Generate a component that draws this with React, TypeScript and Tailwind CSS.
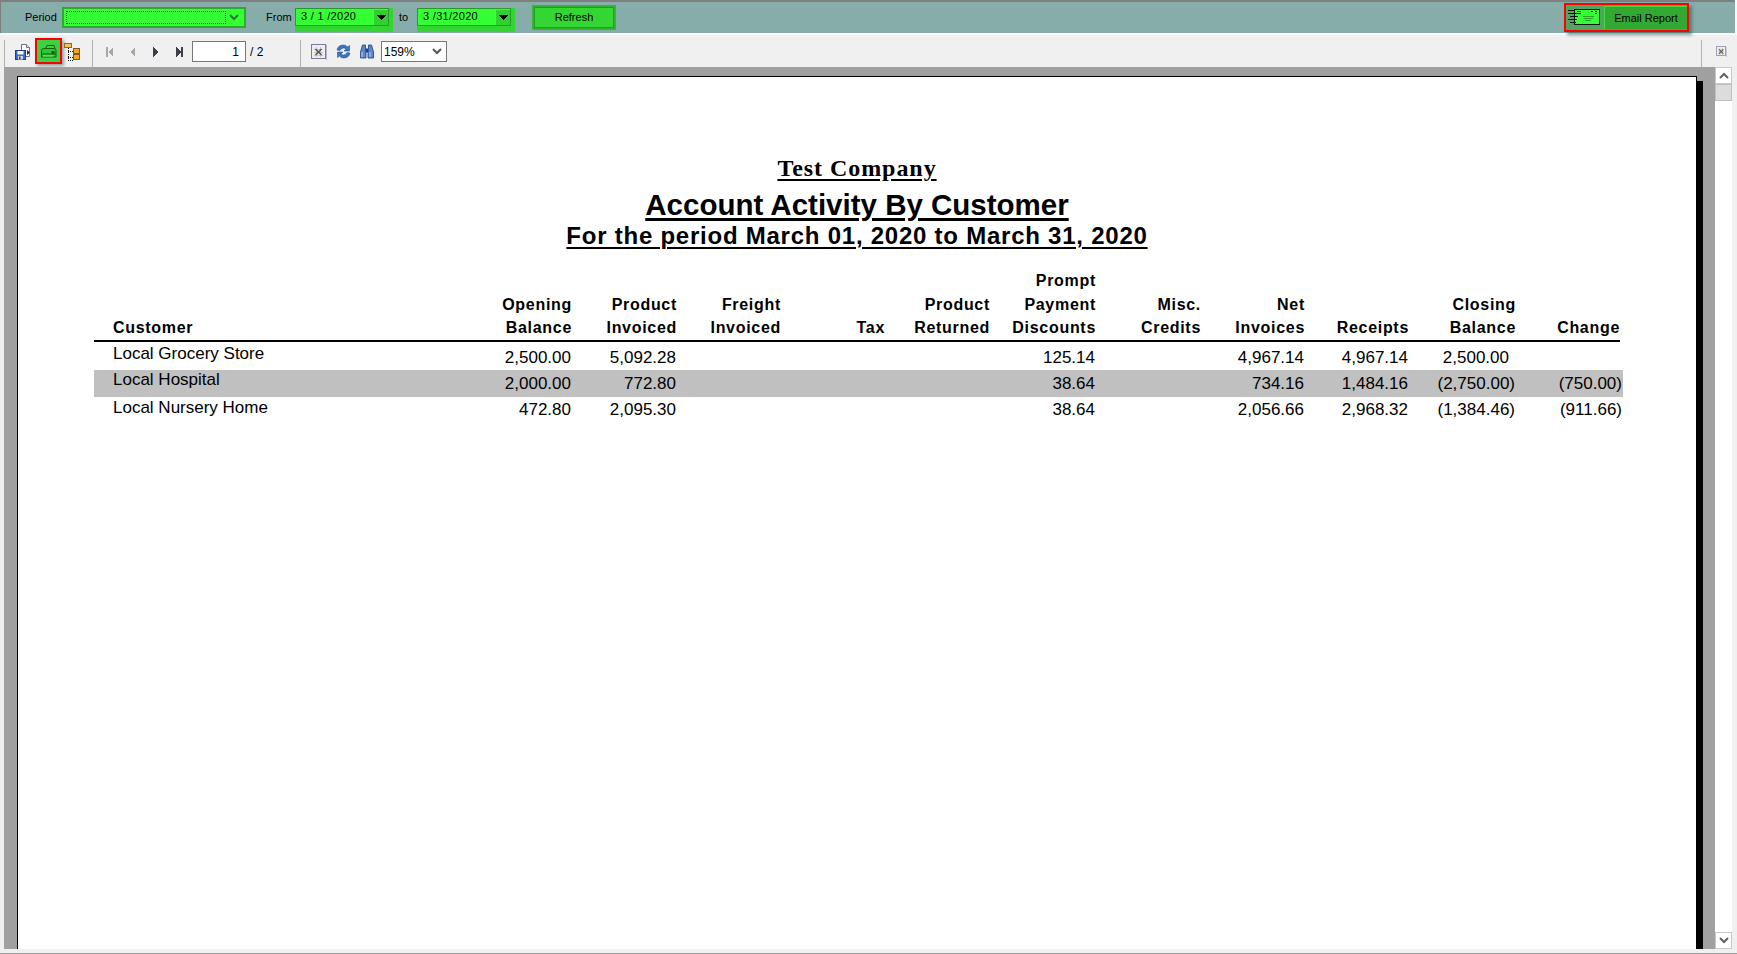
import React from 'react';

const cols = 'grid grid-cols-[373px_105px_105px_104px_104px_105px_106px_105px_104px_104px_107px_107px]';

const headers = [
  ['', '', 'Customer'],
  ['', 'Opening', 'Balance'],
  ['', 'Product', 'Invoiced'],
  ['', 'Freight', 'Invoiced'],
  ['', '', 'Tax'],
  ['', 'Product', 'Returned'],
  ['Prompt', 'Payment', 'Discounts'],
  ['', 'Misc.', 'Credits'],
  ['', 'Net', 'Invoices'],
  ['', '', 'Receipts'],
  ['', 'Closing', 'Balance'],
  ['', '', 'Change'],
];

const rows = [
  { name: 'Local Grocery Store', cells: ['2,500.00', '5,092.28', '', '', '', '125.14', '', '4,967.14', '4,967.14', '2,500.00', ''], h: 'h-[28px]', nameTop: 'pt-[1px]', valTop: 'pt-[5px]', band: false },
  { name: 'Local Hospital', cells: ['2,000.00', '772.80', '', '', '', '38.64', '', '734.16', '1,484.16', '(2,750.00)', '(750.00)'], h: 'h-[27px]', nameTop: '-mt-[1px]', valTop: 'pt-[3px]', band: true },
  { name: 'Local Nursery Home', cells: ['472.80', '2,095.30', '', '', '', '38.64', '', '2,056.66', '2,968.32', '(1,384.46)', '(911.66)'], h: 'h-[27px]', nameTop: 'pt-[0px]', valTop: 'pt-[2px]', band: false },
];

const NavIcon = ({ dir, bar, dark }: { dir: 'l' | 'r'; bar?: boolean; dark?: boolean }) => {
  const fill = dark ? '#3c3f4a' : '#a4a8ad';
  return (
    <svg width="9" height="10" viewBox="0 0 9 10" shapeRendering="crispEdges">
      {dir === 'l' ? (
        <>
          <path d="M7 0v10L2 5z" fill={fill} />
          {bar && <rect x="0" y="0" width="2" height="10" fill={fill} />}
        </>
      ) : (
        <>
          <path d="M2 0v10l5-5z" fill={fill} />
          {bar && <rect x="7" y="0" width="2" height="10" fill={fill} />}
        </>
      )}
    </svg>
  );
};

const SaveIcon = () => (
  <svg width="16" height="17" viewBox="0 0 16 17">
    <path d="M6.500 1.500h5l3 3v9h-8z" fill="#fff" stroke="#6b7480" />
    <path d="M11.500 1.500v3h3" fill="#dfe4ea" stroke="#6b7480" />
    <path d="M12 7l3 2.500-3 2.500z" fill="#1d2b55" />
    <rect x="0.500" y="7.500" width="10" height="9" fill="#3d6cc0" stroke="#1f3c80" />
    <rect x="2.500" y="8" width="6" height="3.500" fill="#f4f6fa" />
    <rect x="3" y="13" width="5" height="3.500" fill="#cfd8e8" />
    <rect x="4" y="13.500" width="1.500" height="2.500" fill="#1f3c80" />
  </svg>
);

const PrintIcon = () => (
  <svg width="17" height="13" viewBox="0 0 17 13">
    <path d="M5.500 3.500l1.500-3h7l1 3" fill="#35d835" stroke="#0d5f14" />
    <path d="M1.500 5.500q0-2 2-2h10.500q2 0 2 2v6.500h-14.500z" fill="#2fc92f" stroke="#0d5f14" />
    <path d="M1.500 9h14.500" stroke="#0d5f14" />
    <rect x="11.500" y="6" width="3" height="3" fill="#0d5f14" />
    <path d="M3 11h10" stroke="#7df07d" />
  </svg>
);

const TreeIcon = () => (
  <svg width="16" height="18" viewBox="0 0 16 18" shapeRendering="crispEdges">
    <path d="M4 5v12M4 8h5M4 14h5M4 17h5" stroke="#111" strokeDasharray="1 1" fill="none" />
    <rect x="0.500" y="0.500" width="7" height="4" fill="#f6c056" stroke="#8a6a1c" />
    <rect x="9.500" y="5.500" width="6" height="5" fill="#f5a623" stroke="#7f5a10" />
    <rect x="9.500" y="11.500" width="6" height="5" fill="#f5a623" stroke="#7f5a10" />
  </svg>
);

const ExportIcon = ({ size = 16 }: { size?: number }) => (
  <svg width={size} height={size} viewBox="0 0 16 16" shapeRendering="crispEdges">
    <rect x="0.500" y="0.500" width="14" height="14" fill="#eeeef2" stroke="#7a7a9e" />
    <path d="M15.500 1v15H1" stroke="#b5b5c8" fill="none" />
    <path d="M3 5.500h9M3 8.500h9M3 11.500h9M5.500 3v10M9.500 3v10" stroke="#c4c4c4" fill="none" />
    <path d="M4.500 5l6 6M10.500 5l-6 6" stroke="#555" strokeWidth="1.500" shapeRendering="auto" />
  </svg>
);

const RefreshIcon = () => (
  <svg width="15" height="15" viewBox="0 0 15 15">
    <path d="M1 6q1-5 6.500-5 3 0 4 2l2-1.500V7H8l1.800-1.800Q9 4 7.500 4 5 4 4 6.500z" fill="#3a74c4" stroke="#1c4590" strokeWidth=".5" />
    <path d="M14 9q-1 5-6.500 5-3 0-4-2l-2 1.500V8H7L5.200 9.800Q6 11 7.500 11 10 11 11 8.500z" fill="#3a74c4" stroke="#1c4590" strokeWidth=".5" />
  </svg>
);

const BinocularsIcon = () => (
  <svg width="14" height="15" viewBox="0 0 14 15">
    <path d="M2.500 1h3v4l.5 1v8H.5V8z" fill="#5a86cc" stroke="#1c3f85" strokeWidth=".8" />
    <path d="M11.500 1h-3v4l-.5 1v8h5.500V8z" fill="#5a86cc" stroke="#1c3f85" strokeWidth=".8" />
    <rect x="5.800" y="4.500" width="2.400" height="4" fill="#1c3f85" />
    <path d="M2 8v5M10 8v5" stroke="#c4d6f2" />
  </svg>
);

const MailIcon = () => (
  <svg width="33" height="17" viewBox="0 0 33 17" shapeRendering="crispEdges">
    <rect x="6.500" y="0.500" width="25" height="15" fill="#33ff33" stroke="#111" />
    <path d="M0 1h7M0 4h13M2 7h8M0 10h9M2 13h6" stroke="#111" />
    <path d="M9 2h4" stroke="#1a6f1a" />
    <path d="M23 2h2M27 2h2M27 4h2" stroke="#111" />
    <path d="M15 7h11M16 9h9M17 11h6" stroke="#2aa52a" />
  </svg>
);

const Caret = () => (
  <svg width="9" height="5" viewBox="0 0 9 5" shapeRendering="crispEdges">
    <path d="M0 0h9L4.500 5z" fill="#000" />
  </svg>
);

const Chevron = ({ color, up }: { color: string; up?: boolean }) => (
  <svg width="10" height="7" viewBox="0 0 10 7">
    <path d={up ? 'M1 6l4-4 4 4' : 'M1 1l4 4 4-4'} fill="none" stroke={color} strokeWidth="2" />
  </svg>
);

const DateBox = ({ value, w }: { value: string; w: string }) => (
  <div className={`${w} h-[24px] self-start mt-[4px] bg-[#33d433] pr-[4px] pb-[6px]`}>
    <div className="h-full flex items-center border border-[#2a9a2a] bg-[#33ff33] pl-[5px]">
      <span className="text-[11px] tracking-[0.3px] text-black flex-1 whitespace-pre">{value}</span>
      <div className="w-[15px] h-full flex items-center justify-center bg-[#2fd02f] border-l border-t border-[#63e463] border-r-[#1f7f1f]">
        <Caret />
      </div>
    </div>
  </div>
);

const App: React.FC = () => {
  return (
    <div className="w-[1737px] h-[954px] overflow-hidden bg-[#f0f0f0] flex flex-col font-['Liberation_Sans',Arial,sans-serif] text-black">
      {/* filter bar */}
      <div className="h-[35px] bg-white pr-[2px] pb-[2px] shrink-0">
        <div className="h-full flex items-center bg-[#87adab] border-t-2 border-l border-[#7f7f7f] pl-[24px] pr-[46px]">
          <span className="w-[32px] text-[11px]">Period</span>
          <div className="ml-[5px] w-[184px] h-[21px] flex items-center border-2 border-[#2eaa2e] bg-[#33ff33] p-[2px]">
            <div className="flex-1 h-full border border-dotted border-[#0a3a0a]" />
            <div className="w-[16px] flex justify-center"><Chevron color="#1f7a3a" /></div>
          </div>
          <span className="ml-[20px] w-[23px] text-[11px]">From</span>
          <div className="ml-[6px] flex"><DateBox value="3 / 1 /2020" w="w-[98px]" /></div>
          <span className="ml-[6px] w-[12px] text-[11px]">to</span>
          <div className="ml-[6px] flex"><DateBox value="3 /31/2020" w="w-[98px]" /></div>
          <button className="ml-[17px] w-[84px] h-[25px] border border-[#3cb043] bg-[#2fb32f] p-[1px]">
            <div className="h-full flex items-center justify-center bg-[#33d633] border border-[#239c23] text-[11px]">Refresh</div>
          </button>
          <div className="ml-auto flex items-center h-[29px] w-[125px] border-2 border-[#ff0000] bg-[#4fa55f] shadow-[3px_3px_3px_rgba(50,90,80,0.6)]">
            <div className="w-[38px] flex justify-end pr-[3px]"><MailIcon /></div>
            <div className="w-[83px] h-[23px] flex items-center justify-center bg-[#33a933] border-t border-l border-[#46d646] border-b-[#1e7f1e] border-r-[#1e7f1e] text-[11px]">
              Email Report
            </div>
          </div>
        </div>
      </div>

      {/* viewer toolbar */}
      <div className="h-[32px] shrink-0 flex items-center pl-[4px] pr-[10px] text-[11px]">
        <div className="h-[27px] mt-[4px] border-l border-[#b0b0b0]" />
        <div className="ml-[10px] w-[16px] mt-[1px]"><SaveIcon /></div>
        <div className="ml-[4px] w-[27px] h-[26px] flex items-center justify-center border-2 border-[#ff0000] bg-[#3ecf45] shadow-[2px_2px_3px_rgba(0,0,0,0.35)]">
          <PrintIcon />
        </div>
        <div className="ml-[2px] w-[16px] mt-[1px]"><TreeIcon /></div>
        <div className="ml-[12px] h-[27px] mt-[4px] border-l border-[#b0b0b0]" />
        <div className="ml-[13px] w-[9px] mt-[1px] flex"><NavIcon dir="l" bar /></div>
        <div className="ml-[13px] w-[9px] mt-[1px] flex"><NavIcon dir="l" /></div>
        <div className="ml-[14px] w-[9px] mt-[1px] flex"><NavIcon dir="r" dark /></div>
        <div className="ml-[14px] w-[9px] mt-[1px] flex"><NavIcon dir="r" bar dark /></div>
        <div className="ml-[9px] w-[54px] h-[21px] mt-[1px] flex items-center justify-end bg-white border border-[#767676] pr-[6px] text-[12px]">1</div>
        <span className="ml-[4px] w-[50px] mt-[1px] text-[12px]">/ 2</span>
        <div className="h-[27px] mt-[4px] border-l border-[#b0b0b0]" />
        <div className="ml-[10px] mt-[1px]"><ExportIcon /></div>
        <div className="ml-[9px] mt-[1px]"><RefreshIcon /></div>
        <div className="ml-[9px] mt-[1px]"><BinocularsIcon /></div>
        <div className="ml-[7px] w-[66px] h-[21px] mt-[1px] flex items-center bg-white border border-[#767676] pl-[2px] pr-[4px] text-[12px]">
          <span className="flex-1">159%</span>
          <Chevron color="#555" />
        </div>
        <div className="ml-auto h-[27px] mt-[4px] border-l border-[#b0b0b0]" />
        <div className="ml-[14px] w-[11px] mt-[1px]"><ExportIcon size={11} /></div>
      </div>

      {/* report area */}
      <div className="flex-1 min-h-0 flex pl-[4px] pr-[5px] overflow-hidden">
        <div className="flex-1 min-w-0 bg-[#a0a0a0] pl-[13px] pr-[12px] pt-[9px] flex overflow-hidden">
          <div className="flex-1 flex items-stretch">
            <div className="flex-1 bg-white border-t border-l border-r border-black h-[1200px] text-black">
              <div className="flex flex-col items-center pt-[77px]">
                <div className="font-['Liberation_Serif',serif] font-bold text-[24px] tracking-[0.95px] leading-[28px] underline underline-offset-[3px] decoration-2">Test Company</div>
                <div className="font-bold text-[29.500px] leading-[34px] mt-[6px] underline underline-offset-[3px] decoration-[3px]">Account Activity By Customer</div>
                <div className="font-bold text-[24px] tracking-[0.76px] leading-[28px] underline underline-offset-[3px] decoration-2">For the period March 01, 2020 to March 31, 2020</div>
              </div>
              <div className="ml-[76px] mt-[19px] w-[1529px]">
                <div className={`${cols} w-[1526px] border-b-2 border-black font-bold text-[16px] tracking-[0.7px] leading-[23.500px]`}>
                  {headers.map((h, i) => (
                    <div key={i} className={i === 0 ? 'pl-[19px]' : i === 11 ? 'text-right pr-[3px]' : 'text-right'}>
                      {h.map((line, j) => <div key={j} className="h-[23.500px]">{line}</div>)}
                    </div>
                  ))}
                </div>
                {rows.map(r => (
                  <div key={r.name} className={`${cols} ${r.h} text-[17px] leading-[22px] ${r.band ? 'bg-[#c0c0c0]' : ''}`}>
                    <div className={`pl-[19px] ${r.nameTop}`}>{r.name}</div>
                    {r.cells.map((c, i) => (
                      <div key={i} className={`text-right ${r.valTop} ${c === '2,500.00' && i === 9 ? 'pr-[7px]' : 'pr-[1px]'}`}>{c}</div>
                    ))}
                  </div>
                ))}
              </div>
            </div>
            <div className="w-[6px] bg-black mt-[5px]" />
          </div>
        </div>
        {/* scrollbar */}
        <div className="w-[17px] shrink-0 bg-white flex flex-col">
          <div className="h-[17px] flex items-center justify-center border border-[#c8c8c8]"><Chevron color="#606060" up /></div>
          <div className="h-[17px] bg-[#dcdcdc] border border-[#c0c0c0]" />
          <div className="flex-1" />
          <div className="h-[17px] flex items-center justify-center border border-[#c8c8c8]"><Chevron color="#606060" /></div>
        </div>
      </div>
      <div className="h-[5px] shrink-0 bg-[#f0f0f0] border-b border-[#a0a0a0]" />
    </div>
  );
};

export default App;
